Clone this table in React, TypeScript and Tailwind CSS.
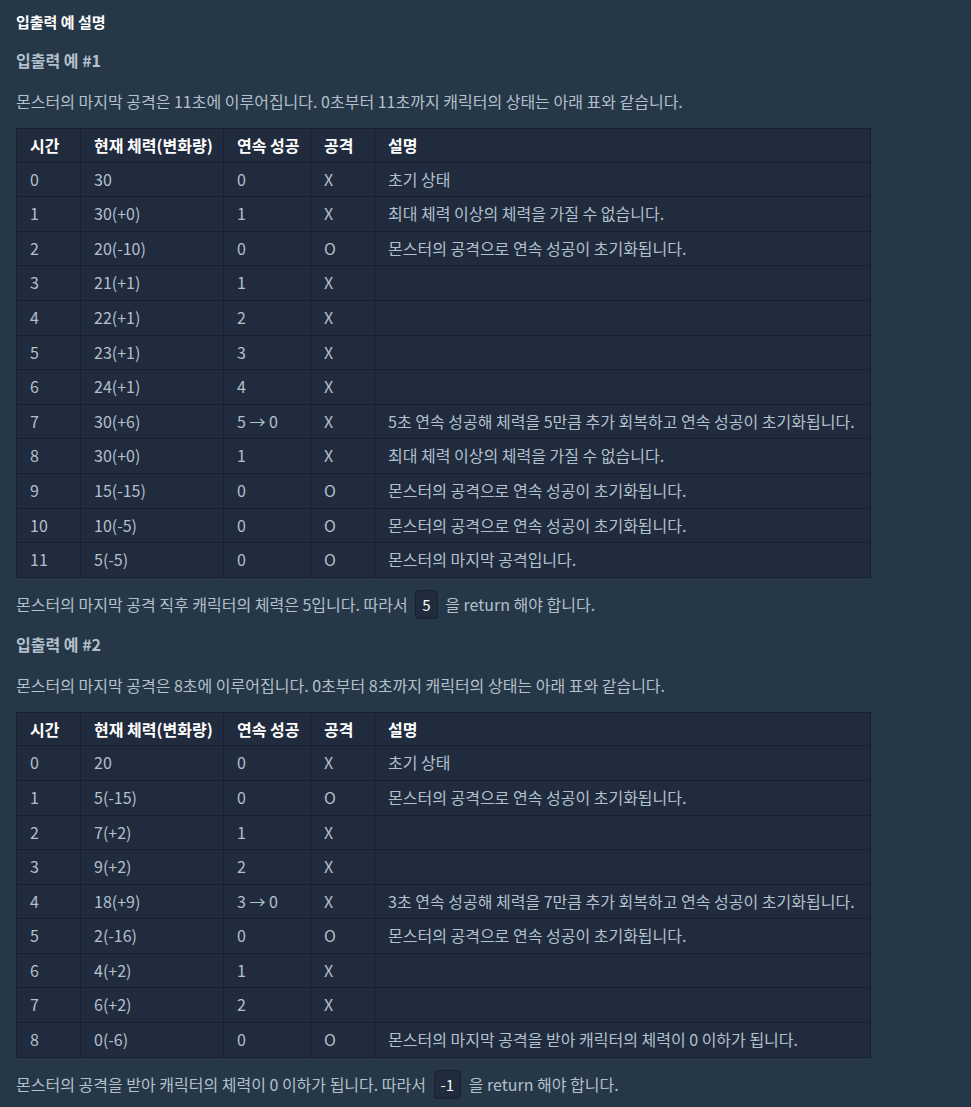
const font = { fontFamily: '"Noto Sans CJK KR", "Noto Sans", sans-serif' };

type Row = [string, string, string, string, string];

const rows1: Row[] = [
  ['0', '30', '0', 'X', '초기 상태'],
  ['1', '30(+0)', '1', 'X', '최대 체력 이상의 체력을 가질 수 없습니다.'],
  ['2', '20(-10)', '0', 'O', '몬스터의 공격으로 연속 성공이 초기화됩니다.'],
  ['3', '21(+1)', '1', 'X', ''],
  ['4', '22(+1)', '2', 'X', ''],
  ['5', '23(+1)', '3', 'X', ''],
  ['6', '24(+1)', '4', 'X', ''],
  ['7', '30(+6)', '5 → 0', 'X', '5초 연속 성공해 체력을 5만큼 추가 회복하고 연속 성공이 초기화됩니다.'],
  ['8', '30(+0)', '1', 'X', '최대 체력 이상의 체력을 가질 수 없습니다.'],
  ['9', '15(-15)', '0', 'O', '몬스터의 공격으로 연속 성공이 초기화됩니다.'],
  ['10', '10(-5)', '0', 'O', '몬스터의 공격으로 연속 성공이 초기화됩니다.'],
  ['11', '5(-5)', '0', 'O', '몬스터의 마지막 공격입니다.'],
];

const rows2: Row[] = [
  ['0', '20', '0', 'X', '초기 상태'],
  ['1', '5(-15)', '0', 'O', '몬스터의 공격으로 연속 성공이 초기화됩니다.'],
  ['2', '7(+2)', '1', 'X', ''],
  ['3', '9(+2)', '2', 'X', ''],
  ['4', '18(+9)', '3 → 0', 'X', '3초 연속 성공해 체력을 7만큼 추가 회복하고 연속 성공이 초기화됩니다.'],
  ['5', '2(-16)', '0', 'O', '몬스터의 공격으로 연속 성공이 초기화됩니다.'],
  ['6', '4(+2)', '1', 'X', ''],
  ['7', '6(+2)', '2', 'X', ''],
  ['8', '0(-6)', '0', 'O', '몬스터의 마지막 공격을 받아 캐릭터의 체력이 0 이하가 됩니다.'],
];

const headers = ['시간', '현재 체력(변화량)', '연속 성공', '공격', '설명'];
const widths = ['w-[64px]', 'w-[143px]', 'w-[87px]', 'w-[64px]', ''];

const StateTable = ({ rows }: { rows: Row[] }) => (
  <table className="w-[855px] border-collapse table-fixed bg-[#202b3d] text-[16px]">
    <colgroup>
      {widths.map((w, i) => (
        <col key={i} className={w} />
      ))}
    </colgroup>
    <thead>
      <tr>
        {headers.map((h) => (
          <th
            key={h}
            className="border border-[#172030] px-[13px] py-[5px] leading-[22.6px] text-left font-bold text-white whitespace-nowrap"
          >
            {h}
          </th>
        ))}
      </tr>
    </thead>
    <tbody>
      {rows.map((r) => (
        <tr key={r[0]}>
          {r.map((c, i) => (
            <td
              key={i}
              className="border border-[#172030] px-[13px] py-[5px] leading-[23.6px] whitespace-nowrap"
            >
              {c}
            </td>
          ))}
        </tr>
      ))}
    </tbody>
  </table>
);

const Code = ({ children }: { children: string }) => (
  <code
    className="mx-[4px] rounded-[4px] border border-[#172030] bg-[#202b3d] px-[6px] py-[3px] text-[15px] leading-none text-white"
    style={font}
  >
    {children}
  </code>
);

export default function App() {
  return (
    <div className="min-h-screen bg-[#263747] px-4 pt-[10px] pb-6 text-[16px] leading-6 text-[#b2c0cc]" style={font}>
      <h5 className="mb-[14px] text-[15px] font-bold text-white">입출력 예 설명</h5>

      <h6 className="mb-[17px] text-[16px] font-bold text-[#b2c0cc]">입출력 예 #1</h6>
      <p className="mb-[15px]">
        몬스터의 마지막 공격은 11초에 이루어집니다. 0초부터 11초까지 캐릭터의 상태는 아래 표와 같습니다.
      </p>
      <StateTable rows={rows1} />
      <p className="mt-[14px] mb-[16px] leading-6">
        몬스터의 마지막 공격 직후 캐릭터의 체력은 5입니다. 따라서 <Code>5</Code> 을 return 해야 합니다.
      </p>

      <h6 className="mb-[17px] text-[16px] font-bold text-[#b2c0cc]">입출력 예 #2</h6>
      <p className="mb-[15px]">
        몬스터의 마지막 공격은 8초에 이루어집니다. 0초부터 8초까지 캐릭터의 상태는 아래 표와 같습니다.
      </p>
      <StateTable rows={rows2} />
      <p className="mt-[14px] leading-6">
        몬스터의 공격을 받아 캐릭터의 체력이 0 이하가 됩니다. 따라서 <Code>-1</Code> 을 return 해야 합니다.
      </p>
    </div>
  );
}
